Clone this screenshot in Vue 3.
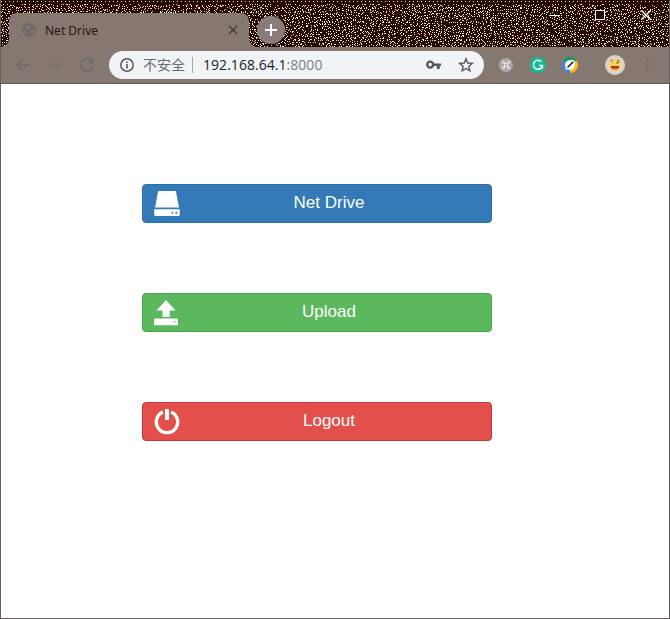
<script setup>
const actions = [
  { label: 'Net Drive', kind: 'primary', icon: 'drive' },
  { label: 'Upload', kind: 'success', icon: 'upload' },
  { label: 'Logout', kind: 'danger', icon: 'power' },
]

// Speckled title bar texture: one jittered dot for most 2x2 cells.
function speckles(width, height) {
  let seed = 20417
  const rand = () => {
    seed = (seed * 1103515245 + 12345) % 2147483648
    return seed / 2147483648
  }
  let d = ''
  for (let x = 0; x < width; x += 4) d += `M${x} 1h1v1h-1z`
  for (let y = 4; y < height; y += 2) {
    for (let x = 0; x < width; x += 2) {
      if (rand() < 0.72) {
        const px = x + (rand() < 0.5 ? 0 : 1)
        const py = y + (rand() < 0.5 ? 0 : 1)
        d += `M${px} ${py}h1v1h-1z`
      }
    }
  }
  return d
}
const dots = speckles(668, 47)
</script>

<template>
  <div class="window">
    <header class="titlebar">
      <svg class="texture" width="668" height="47" viewBox="0 0 668 47" shape-rendering="crispEdges">
        <path :d="dots" fill="#efe3cb" />
      </svg>
      <div class="tab">
        <svg class="globe" width="14" height="14" viewBox="0 0 14 14">
          <circle cx="7" cy="7" r="7" fill="#6e6968" />
          <path d="M1.5 6.2 5 9.2v2.6C2.8 11 1.5 9 1.5 6.2zM5.4 2.2l3.4-.7.3 1.8-2 1.4-.3 1.6H4.2l-.9-1.4zM8.2 7.3l3-.5 1.2 1.2-2.2 3.6-1.4-.8z" fill="#857871" />
        </svg>
        <span class="tab-title">Net Drive</span>
        <svg class="tab-close" width="10" height="10" viewBox="0 0 10 10">
          <path d="M1 1l8 8M9 1L1 9" stroke="#463b37" stroke-width="1.5" />
        </svg>
      </div>
      <div class="new-tab">
        <svg width="14" height="14" viewBox="0 0 14 14"><path d="M7 1v12M1 7h12" stroke="#fff" stroke-width="2" /></svg>
      </div>
      <div class="controls">
        <svg width="10" height="10" viewBox="0 0 10 10"><path d="M0 5.5h10" stroke="#fff" /></svg>
        <svg width="10" height="10" viewBox="0 0 10 10"><path d="M.5.5h9v9h-9z" fill="#240903" stroke="#fff" /></svg>
        <svg width="10" height="10" viewBox="0 0 10 10"><path d="M0 0l10 10M10 0L0 10" stroke="#fff" stroke-width="1.4" /></svg>
      </div>
    </header>

    <nav class="toolbar">
      <div class="nav-icons">
        <svg width="16" height="16" viewBox="0 0 16 16"><path d="M15 8H2M8 2L2 8l6 6" /></svg>
        <svg class="forward" width="16" height="16" viewBox="0 0 16 16"><path d="M1 8h13M8 2l6 6-6 6" /></svg>
        <svg width="16" height="16" viewBox="0 0 16 16">
          <path d="M13.2 4.6A6.1 6.1 0 1 0 14 9" />
          <path d="M14.5 1v6h-6z" class="solid" />
        </svg>
      </div>
      <div class="address">
        <svg class="info" width="14" height="14" viewBox="0 0 14 14">
          <circle cx="7" cy="7" r="6.2" fill="none" stroke="#55585c" stroke-width="1.5" />
          <path d="M7 6v4.4M7 3.4v1.5" stroke="#55585c" stroke-width="1.6" />
        </svg>
        <span class="insecure">不安全</span>
        <span class="divider"></span>
        <span class="url">192.168.64.1<span class="port">:8000</span></span>
        <svg class="key" width="15" height="10" viewBox="0 0 15 10">
          <circle cx="4.2" cy="4.6" r="3" fill="none" stroke="#55585c" stroke-width="2.4" />
          <path d="M7 3.4h8v2.7h-1.3V9h-2.8V6.1H7z" fill="#55585c" />
        </svg>
        <svg class="star" width="16" height="16" viewBox="0 0 16 16">
          <path d="M8 1.8l1.75 4.2 4.55.4-3.45 3 1.03 4.4L8 11.5l-3.88 2.3 1.03-4.4-3.45-3L6.25 6z" fill="none" stroke="#55585c" stroke-width="1.4" />
        </svg>
      </div>
      <div class="extensions">
        <svg width="14" height="14" viewBox="0 0 14 14">
          <circle cx="7" cy="7" r="7" fill="#aaa6a5" />
          <path d="M5.5 5.5h3v3h-3zM5.5 5.5H4.4a1.2 1.2 0 1 1 1.1-1.1zM8.5 5.5V4.4a1.2 1.2 0 1 1 1.1 1.1zM8.5 8.5h1.1a1.2 1.2 0 1 1-1.1 1.1zM5.5 8.5v1.1a1.2 1.2 0 1 1-1.1-1.1z" fill="none" stroke="#f3f1ef" stroke-width=".9" />
        </svg>
        <svg width="16" height="16" viewBox="0 0 16 16">
          <circle cx="8" cy="8" r="8" fill="#13bc94" />
          <path d="M11.2 4.7A4.5 4.5 0 1 0 12.4 8.6H9M12.4 8.6v2.8" fill="none" stroke="#fff" stroke-width="1.5" />
        </svg>
        <svg width="16" height="16" viewBox="0 0 16 16">
          <circle cx="8" cy="8" r="5.5" fill="#fff" />
          <g fill="none" stroke-width="3">
            <path d="M2.4 4.7A6.5 6.5 0 0 1 13.4 4.4" stroke="#159b61" />
            <path d="M13.4 4.4A6.5 6.5 0 0 1 8 14.5" stroke="#fbbc12" />
            <path d="M8 14.5A6.5 6.5 0 0 1 2.4 4.7" stroke="#3f83ee" />
          </g>
          <path d="M4.2 11.8l.8-2.9 5.600-5.600 2.100 2.100-5.600 5.600z" fill="#263238" stroke="#fff" stroke-width="1.300" />
        </svg>
        <svg class="avatar" width="20" height="20" viewBox="0 0 20 20">
          <circle cx="10" cy="10" r="10" fill="#d8d2cf" />
          <circle cx="10" cy="10" r="6.5" fill="#ffd557" />
          <path d="M5.700 11h8.600c0 4.800-8.600 4.800-8.600 0z" fill="#a32d28" />
          <path d="M7.300 13.100q2.700-1.200 5.400 0-2.700 2.200-5.400 0z" fill="#ef5650" />
          <circle cx="7.300" cy="7.800" r="1.300" fill="#fff" /><circle cx="7.400" cy="7.900" r=".7" fill="#5b3b20" />
          <path d="M11.300 8.200l2.900-.9M5.800 6l1.800-.7M12 5.500l1.800.3" fill="none" stroke="#5b3b20" stroke-width="1" />
        </svg>
        <svg class="more" width="4" height="14" viewBox="0 0 4 14">
          <circle cx="2" cy="2" r="1.5" /><circle cx="2" cy="7" r="1.5" /><circle cx="2" cy="12" r="1.5" />
        </svg>
      </div>
    </nav>

    <main class="page">
      <button v-for="a in actions" :key="a.label" class="btn" :class="a.kind">
        <svg v-if="a.icon === 'drive'" class="icon" width="26" height="26" viewBox="0 0 26 26">
          <path d="M5 0h16q.800 0 1 .800L25 16.500H1L4 .800Q4.200 0 5 0z" fill="#fff" />
          <path d="M1 18.300h24q.800 0 .800.800v4.500q0 1.500-1.500 1.500H1.700Q.2 25.100.2 23.600v-4.500q0-.800.800-.800z" fill="#fff" />
          <circle cx="18.300" cy="21.700" r="1" fill="#337ab7" /><circle cx="22.300" cy="21.700" r="1" fill="#337ab7" />
        </svg>
        <svg v-else-if="a.icon === 'upload'" class="icon" width="26" height="26" viewBox="0 0 26 26">
          <path d="M12 0l9.500 10.500H15.700v6.500H8.500v-6.500H2.500z" fill="#fff" />
          <path d="M1 18.600h22q1 0 1 1v5q0 .600-.600.600H.700q-.600 0-.600-.600v-5q0-1 .900-1z" fill="#fff" />
          <path d="M19.500 21.300h2v1h-2z" fill="#5cb85c" />
        </svg>
        <svg v-else class="icon" width="26" height="26" viewBox="0 0 26 26">
          <path d="M9 3A10.700 10.700 0 1 0 17 3" fill="none" stroke="#fff" stroke-width="3.400" />
          <path d="M11 0h4v11h-4z" fill="#fff" />
        </svg>
        <span class="label">{{ a.label }}</span>
      </button>
    </main>
  </div>
</template>

<style>
body { margin: 0; }
</style>

<style scoped>
* { box-sizing: border-box; }
svg { display: block; flex: none; }
.window {
  width: 670px;
  height: 619px;
  border: solid #655f60;
  border-width: 0 1px 1px;
  background: #fff;
  overflow: hidden;
}
.titlebar {
  position: relative;
  display: flex;
  height: 47px;
  padding: 0 18px 0 8px;
  background: #240903;
}
.texture { position: absolute; top: 0; left: 0; }
.tab {
  position: relative;
  display: flex;
  align-items: center;
  width: 240px;
  height: 34px;
  margin-top: 13px;
  padding: 0 11px 0 13px;
  border-radius: 8px 8px 0 0;
  background: #857871;
}
.tab::before,
.tab::after {
  content: '';
  position: absolute;
  bottom: 0;
  width: 8px;
  height: 8px;
}
.tab::before { left: -8px; background: radial-gradient(circle at 0 0, transparent 7.5px, #857871 8px); }
.tab::after { right: -8px; background: radial-gradient(circle at 100% 0, transparent 7.5px, #857871 8px); }
.tab-title {
  flex: 1;
  margin-left: 9px;
  padding-top: 2px;
  font: 12px/16px "Noto Sans", sans-serif;
  color: #281713;
}
.new-tab {
  position: relative;
  display: grid;
  place-items: center;
  width: 28px;
  height: 28px;
  margin: 16px 0 0 8px;
  border-radius: 50%;
  background: #877c79;
}
.controls {
  position: relative;
  display: flex;
  gap: 36px;
  margin: 10px 0 0 auto;
}
.toolbar {
  display: flex;
  align-items: center;
  height: 37px;
  padding: 0 0 1px 14px;
  border-bottom: 1px solid #5f5855;
  background: #857871;
}
.nav-icons { display: flex; gap: 16px; width: 94px; }
.nav-icons path { fill: none; stroke: #736b68; stroke-width: 2; }
.nav-icons .forward path { stroke: #7d736e; }
.nav-icons .solid { fill: #736b68; stroke: none; }
.address {
  display: flex;
  align-items: center;
  width: 375px;
  height: 28px;
  padding: 0 10px 0 11px;
  border-radius: 14px;
  background: #f1f3f7;
  font: 14px/20px "Open Sans", "Noto Sans CJK SC", sans-serif;
}
.insecure { margin: -2px 0 0 9px; color: #686c72; font-family: "Noto Sans CJK SC", sans-serif; }
.divider { width: 1px; height: 16px; margin: 0 10px 0 7px; background: #a2a5aa; }
.url { flex: 1; color: #202226; letter-spacing: 0.04px; }
.port { color: #7c8188; }
.key { margin-right: 17px; }
.extensions { display: flex; align-items: center; gap: 17px; margin-left: 15px; }
.extensions svg:nth-child(3) { margin-left: -1px; }
.avatar { margin-left: 10px; }
.more { margin-left: 3px; fill: #7a706b; }
.page {
  display: flex;
  flex-direction: column;
  gap: 70px;
  padding: 100px 0 0 141px;
}
.btn {
  display: flex;
  align-items: center;
  width: 350px;
  height: 39px;
  padding: 0 11px;
  border: 1px solid;
  border-radius: 4px;
  color: #fff;
  font: 17px/24px "Liberation Sans", Arial, sans-serif;
}
.label { flex: 1; padding: 0 2px 1px 0; text-align: center; }
.primary { background: #337ab7; border-color: #2e6da4; }
.success { background: #5cb85c; border-color: #45a748; }
.danger { background: #e34f4a; border-color: #c93538; }
</style>
